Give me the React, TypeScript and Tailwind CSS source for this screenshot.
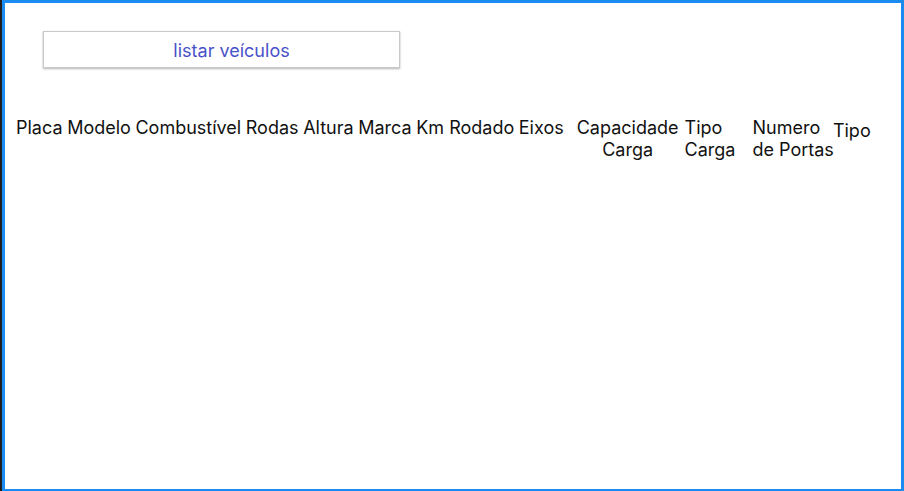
const simple = ['Placa', 'Modelo', 'Combustível', 'Rodas', 'Altura', 'Marca', 'Km Rodado', 'Eixos'];

export default function App() {
  return (
    <div className="flex h-[491px] w-[904px] bg-[#1e1e1e] pl-[2px]">
      <div className="flex-1 border-[3px] border-b-2 border-[#1a8cf0] bg-white font-['Inter',sans-serif] text-[#111]">
        <div className="pl-[38px] pt-[28px]">
          <button className="h-[37px] w-[357px] border border-[#c8c8c8] bg-white pl-[20px] pt-[2px] text-[18px] text-[#4a52c9] shadow-[0_1px_2px_rgba(0,0,0,0.3)]">
            listar veículos
          </button>
        </div>
        <div className="mt-[49px] flex items-start whitespace-nowrap pl-[11px] text-[18px] leading-[22px]">
          <div className="flex gap-[4.6px]">
            {simple.map((s) => (
              <div key={s}>{s}</div>
            ))}
          </div>
          <div className="ml-[13px] text-center">
            <div>Capacidade</div>
            <div>Carga</div>
          </div>
          <div className="ml-[6px]">
            <div>Tipo</div>
            <div>Carga</div>
          </div>
          <div className="ml-[17px]">
            <div>Numero</div>
            <div>de Portas</div>
          </div>
          <div className="-ml-[1px] mt-[3px]">Tipo</div>
        </div>
      </div>
    </div>
  );
}
